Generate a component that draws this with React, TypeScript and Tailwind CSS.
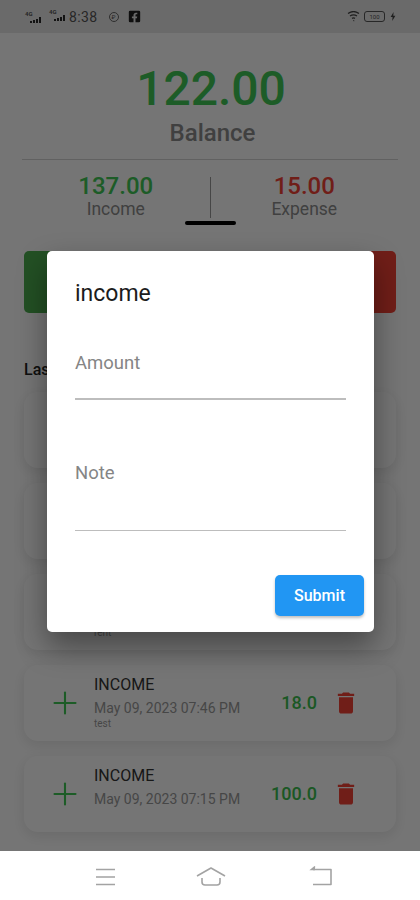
import { Plus } from "lucide-react";
import { MdDelete } from "react-icons/md";
import { FaFacebookSquare } from "react-icons/fa";

const font = "font-['Roboto','Liberation_Sans',sans-serif]";

const rows = [
  { amount: "50.0", date: "May 10, 2023 08:12 AM", note: "" },
  { amount: "12.0", date: "May 09, 2023 09:30 PM", note: "" },
  { amount: "7.0", date: "May 09, 2023 08:02 PM", note: "rent" },
  { amount: "18.0", date: "May 09, 2023 07:46 PM", note: "test" },
  { amount: "100.0", date: "May 09, 2023 07:15 PM", note: "" },
];

function Signal() {
  return (
    <span className="relative inline-block h-[14px] w-[19px]">
      <span className="absolute left-0 top-0 text-[6px] leading-[8px] font-bold text-[#555]">4G</span>
      <svg width="19" height="14" viewBox="0 0 19 14" className="absolute inset-0">
        <rect x="5" y="11" width="2" height="2" fill="#2a2a2a" />
        <rect x="8" y="10" width="2" height="3" fill="#2a2a2a" />
        <rect x="11" y="9" width="2" height="4" fill="#2a2a2a" />
        <rect x="14" y="7" width="2" height="6" fill="#2a2a2a" />
      </svg>
    </span>
  );
}

function StatusBar() {
  return (
    <div className="flex h-[33px] items-center justify-between bg-[#e8e8e8] pl-[25px] pr-[24px] text-[#555]">
      <div className="flex items-center">
        <Signal />
        <span className="ml-[5px]"><Signal /></span>
        <span className="ml-[1px] text-[14px] leading-none tracking-[0.4px]">8:38</span>
        <span className="ml-[11px] flex h-[10px] w-[10px] items-center justify-center rounded-full border border-[#666] text-[6px] leading-none">₽</span>
        <FaFacebookSquare className="ml-[9px] text-[13px] text-[#222]" />
      </div>
      <div className="flex items-center">
        <svg width="14" height="11" viewBox="0 0 14 11" fill="none" stroke="#444" strokeWidth="1.3">
          <path d="M1 2.5 C4.5 0 8.5 0 12 2.5" />
          <path d="M3 5 C5.2 3.5 7.8 3.5 10 5" />
          <path d="M5 7.4 C6 6.7 7 6.7 8 7.4" />
          <path d="M6.5 10 L7 9.4" />
        </svg>
        <span className="ml-[3px] flex h-[11px] w-[21px] items-center justify-center rounded-[3px] border border-[#555] text-[6px] leading-none">100</span>
        <svg width="6" height="9" viewBox="0 0 6 9" className="ml-[5px]">
          <path d="M3.6 0 L0.6 5 H2.6 L2.2 9 L5.4 3.8 H3.3 Z" fill="#444" />
        </svg>
      </div>
    </div>
  );
}

function Summary() {
  return (
    <div className="mx-[22px]">
      <div className="flex flex-col items-center border-b border-[#d4d4d4] pb-[13px] pl-[2px] pt-[26px]">
        <div className="text-[48px] leading-[60px] font-medium text-[#40c855]">122.00</div>
        <div className="mt-[1px] pl-[3px] text-[24px] leading-[26px] font-medium text-[#8c8c8c]">Balance</div>
      </div>
      <div className="relative flex h-[65px]">
        <div className="flex flex-1 flex-col items-center pt-[13px]">
          <div className="text-[24px] leading-[26px] font-medium text-[#40c855]">137.00</div>
          <div className="text-[17.5px] leading-[20px] text-[#8c8c8c]">Income</div>
        </div>
        <div className="mt-[17px] h-[41px] w-px bg-[#999]" />
        <div className="flex flex-1 flex-col items-center pt-[13px]">
          <div className="text-[24px] leading-[26px] font-medium text-[#f44336]">15.00</div>
          <div className="text-[17.5px] leading-[20px] text-[#8c8c8c]">Expense</div>
        </div>
        <div className="absolute left-[163px] top-[61px] h-[4px] w-[51px] rounded-sm bg-black" />
      </div>
    </div>
  );
}

function Row({ amount, date, note }: { amount: string; date: string; note: string }) {
  return (
    <div className="flex h-[76px] shrink-0 items-center rounded-[14px] bg-white pl-[23px] pr-[36px] shadow-[0_4px_14px_rgba(0,0,0,0.1)]">
      <Plus size={36} strokeWidth={1.4} className="shrink-0 text-[#40c855]" />
      <div className="ml-[11px] flex-1 self-start pt-[10px]">
        <div className="text-[16px] leading-[20px] text-[#333]">INCOME</div>
        <div className="mt-[4px] text-[14px] leading-[18px] text-[#9a9a9a]">{date}</div>
        {note && <div className="mt-[2px] text-[10px] leading-[10px] text-[#9a9a9a]">{note}</div>}
      </div>
      <div className="mb-[2px] text-[18px] font-medium text-[#3cc050]">{amount}</div>
      <MdDelete size={28} className="ml-[15px] shrink-0 text-[#f44336]" />
    </div>
  );
}

function Dialog() {
  return (
    <div className="absolute left-[47px] top-[251px] flex h-[381px] w-[327px] flex-col rounded-[5px] bg-white pl-[28px] pr-[10px] shadow-[0_14px_30px_rgba(0,0,0,0.4)]">
      <div className="mt-[29px] text-[23px] leading-[28px] text-[#1c1c1c]">income</div>
      <div className="mt-[43px] text-[18.5px] leading-[24px] text-[#858585]">Amount</div>
      <div className="mr-[18px] mt-[23px] h-[1.5px] bg-[#bdbdbd]" />
      <div className="mt-[61px] text-[18.5px] leading-[24px] text-[#858585]">Note</div>
      <div className="mr-[18px] mt-[45px] h-[1.5px] bg-[#bdbdbd]" />
      <div className="mt-[44px] flex justify-end">
        <button className="h-[41px] w-[89px] rounded-[5px] bg-[#2196f3] text-[16px] font-medium text-white shadow-[0_2px_3px_rgba(0,0,0,0.25)]">
          Submit
        </button>
      </div>
    </div>
  );
}

function BottomNav() {
  return (
    <div className="flex h-[49px] shrink-0 items-center justify-center bg-white pt-[2px]">
      <svg width="236" height="26" viewBox="0 0 236 26" fill="none" stroke="#a3a3a3" strokeWidth="1.6" className="ml-[8px]">
        <path d="M0 5.5 H19 M0 13 H19 M0 20.5 H19" />
        <path d="M101 12 L115 4 L129 12" strokeLinejoin="round" />
        <path d="M106 14 V18 Q106 21 109 21 H121 Q124 21 124 18 V14" />
        <path d="M217 5.5 H235 V20.5 H217" strokeLinejoin="round" />
        <path d="M219 2.5 L215.5 5.5 L219 5.5" fill="#a3a3a3" />
      </svg>
    </div>
  );
}

export default function App() {
  return (
    <div className={`flex h-[900px] w-[420px] flex-col overflow-hidden bg-white ${font}`}>
      <div className="relative flex-1 overflow-hidden">
        <StatusBar />
        <Summary />
        <div className="mx-[24px] mt-[26px] flex h-[62px] overflow-hidden rounded-[5px]">
          <div className="flex-1 bg-[#4caf50]" />
          <div className="w-[27px] bg-white" />
          <div className="flex-1 bg-[#f44336]" />
        </div>
        <div className="ml-[24px] mt-[47px] text-[16px] leading-[20px] font-medium text-[#222]">Last</div>
        <div className="mx-[24px] mt-[12px] flex flex-col gap-[15px]">
          {rows.map((r) => (
            <Row key={r.date} amount={r.amount} date={r.date} note={r.note} />
          ))}
        </div>
        <div className="absolute inset-0 bg-black/54" />
        <Dialog />
      </div>
      <BottomNav />
    </div>
  );
}
